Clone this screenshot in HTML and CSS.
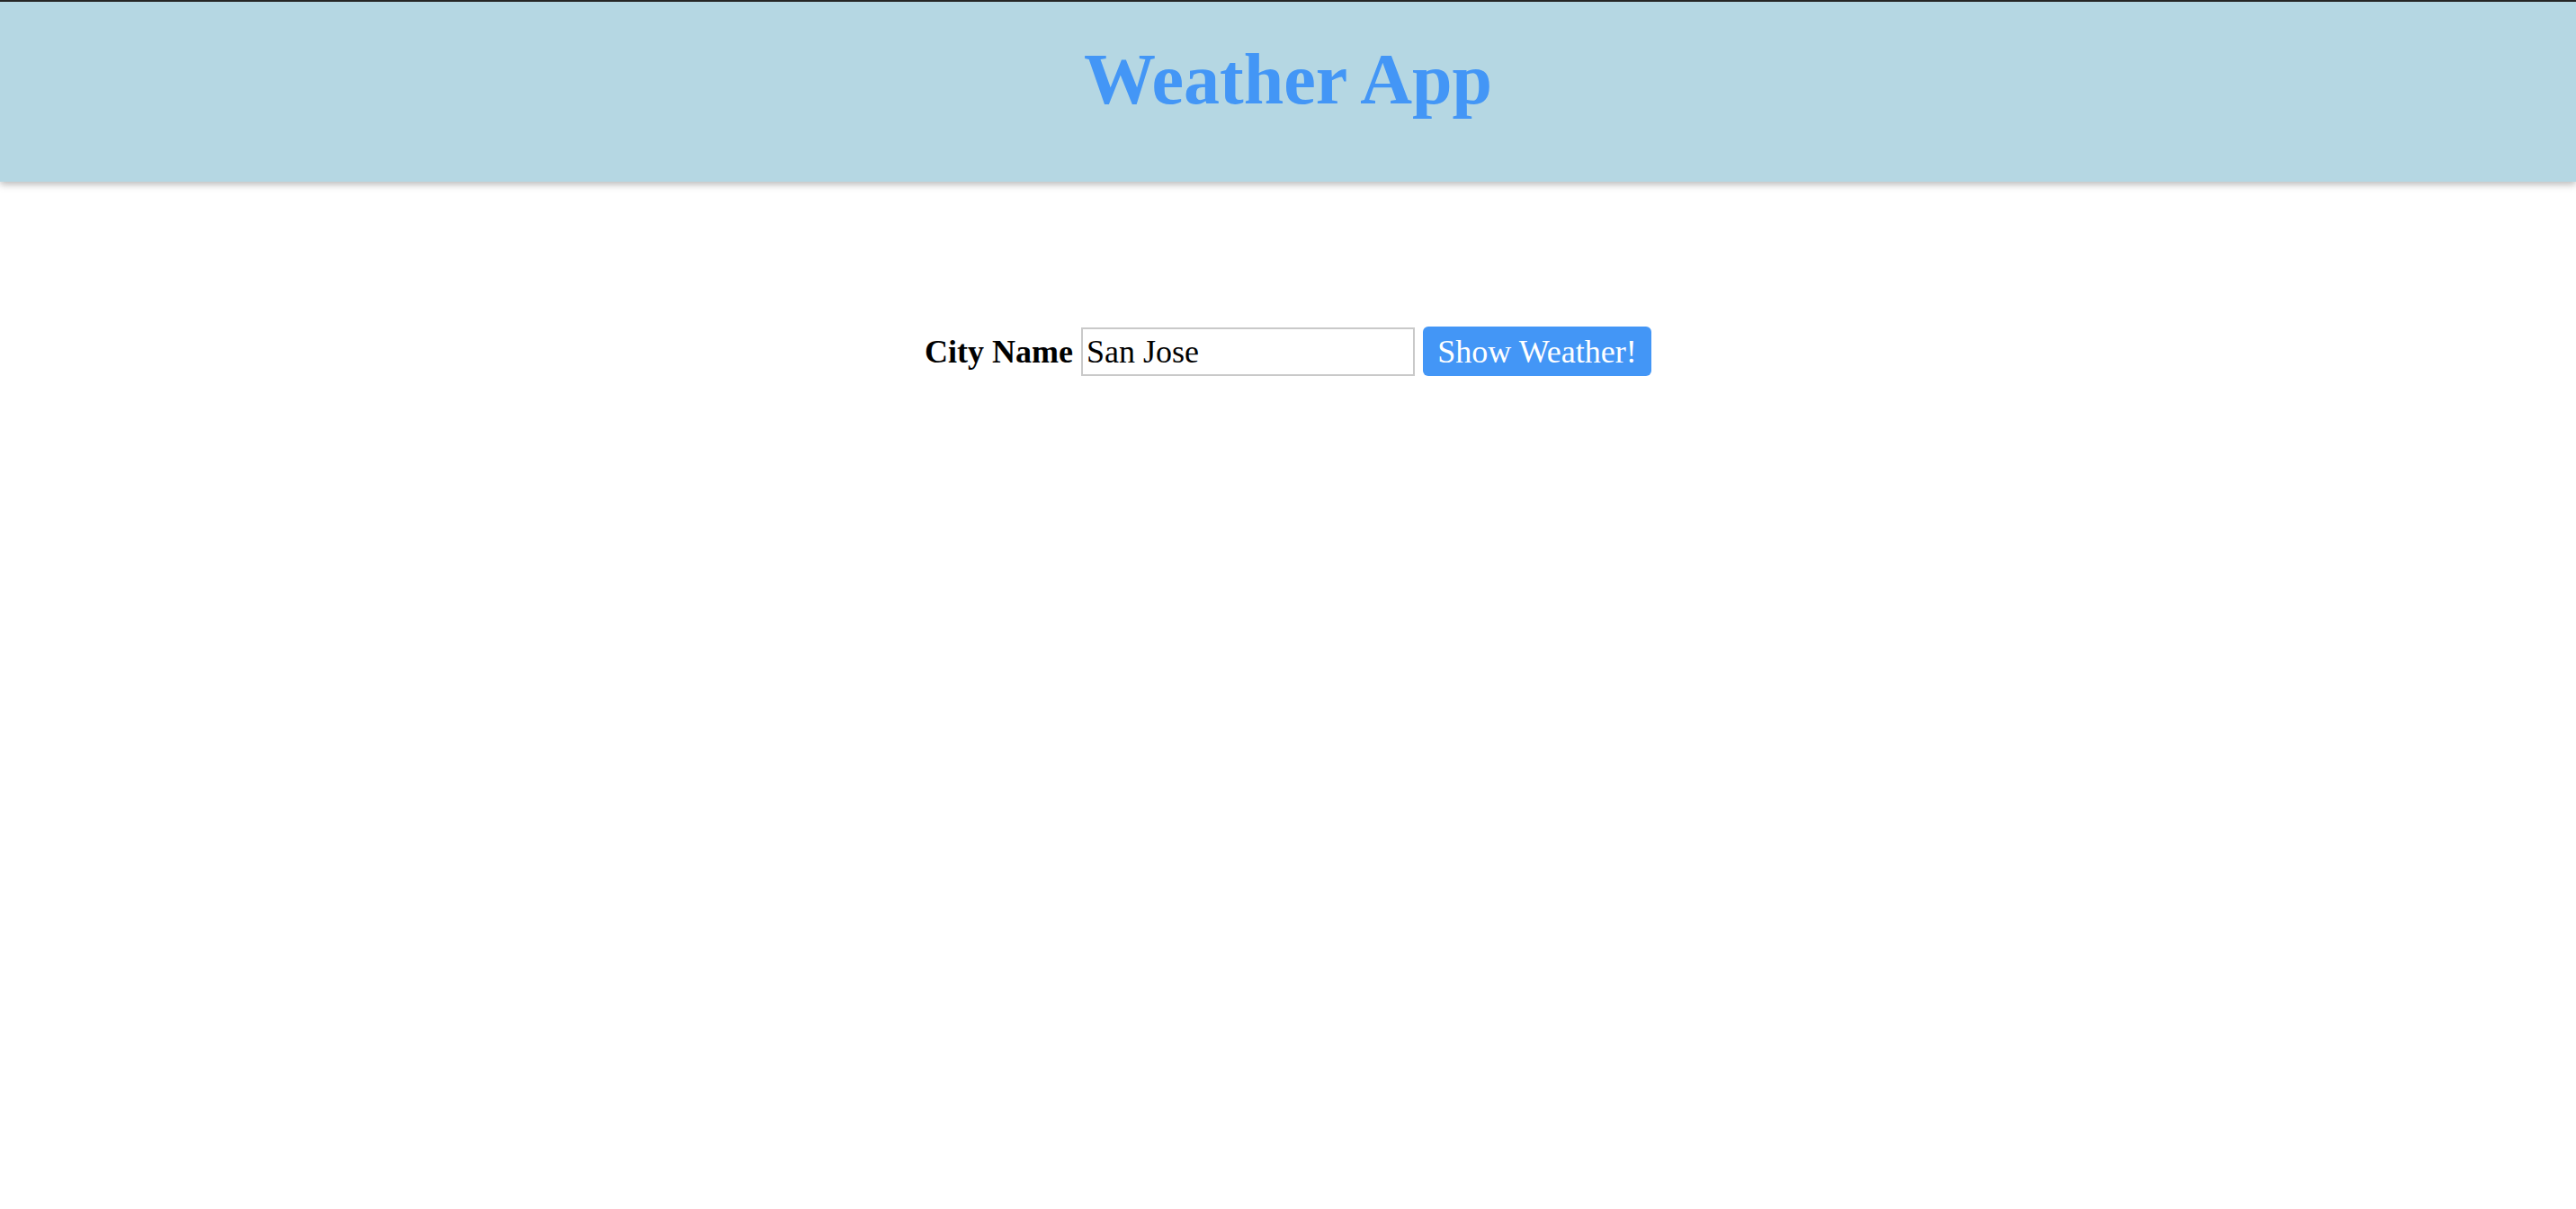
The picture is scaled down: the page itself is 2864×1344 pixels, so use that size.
FILE: index.html
```html
<!DOCTYPE html>
<html lang="en">
<head>
<meta charset="utf-8">
<title>Weather App</title>
<link rel="stylesheet" href="styles.css">
</head>
<body>
<header class="app-header">
  <h1 class="app-title">Weather App</h1>
</header>
<main class="app-main">
  <form class="city-form">
    <label class="city-label" for="city">City Name</label>
    <input class="city-input" id="city" type="text" value="San Jose">
    <button class="show-btn" type="button">Show Weather!</button>
  </form>
</main>
</body>
</html>
```

FILE: styles.css
```css
html, body {
  margin: 0;
  padding: 0;
  background: #ffffff;
}
body {
  font-family: "Liberation Serif", "Times New Roman", serif;
  border-top: 2px solid #262626;
}
.app-header {
  background: #b5d7e3;
  height: 200px;
  box-sizing: border-box;
  padding-top: 42px;
  box-shadow: 0 3px 8px rgba(0, 0, 0, 0.28);
  position: relative;
}
.app-title {
  margin: 0;
  text-align: center;
  font-size: 80px;
  font-weight: bold;
  color: #4396f6;
  line-height: 89px;
}
.app-main {
  padding-top: 161px;
}
.city-form {
  display: flex;
  justify-content: center;
  align-items: center;
  gap: 9px;
}
.city-label {
  font-size: 36px;
  font-weight: bold;
  color: #000;
}
.city-input {
  box-sizing: border-box;
  width: 371px;
  height: 54px;
  border: 2px solid #c9c9c9;
  padding: 0 4px;
  font-family: "Liberation Serif", "Times New Roman", serif;
  font-size: 36px;
  color: #000;
  background: #fff;
  outline: none;
}
.show-btn {
  box-sizing: border-box;
  width: 254px;
  height: 55px;
  border: none;
  border-radius: 6px;
  background: #4396f6;
  color: #fff;
  font-family: "Liberation Serif", "Times New Roman", serif;
  font-size: 36px;
  padding: 0;
}
```
